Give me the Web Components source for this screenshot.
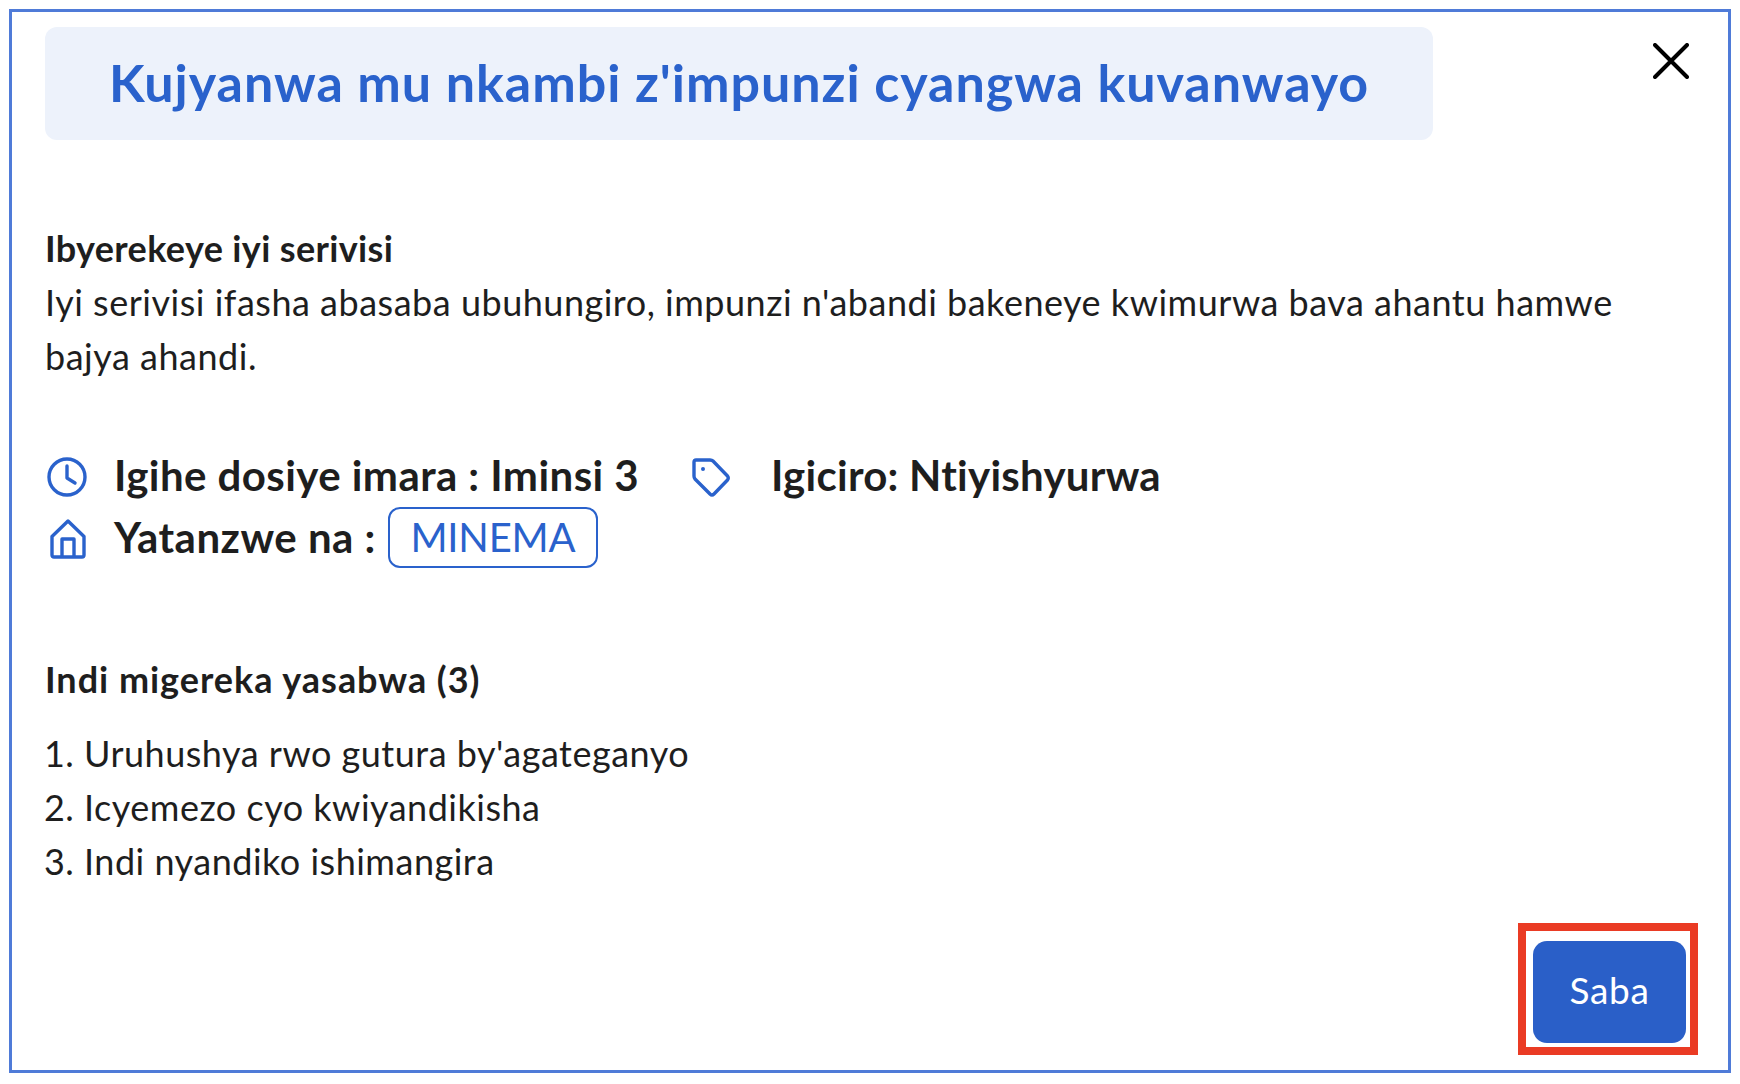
<!DOCTYPE html>
<html lang="rw">
<head>
<meta charset="utf-8">
<title>Kujyanwa mu nkambi</title>
<style>
  html, body { margin: 0; background: #fff; }
  body { font-family: Lato, "Noto Sans", sans-serif; color: #1e1e1e; }
</style>
</head>
<body>
<service-modal>
  <span slot="title">Kujyanwa mu nkambi z'impunzi cyangwa kuvanwayo</span>
  <info-section heading="Ibyerekeye iyi serivisi">
    Iyi serivisi ifasha abasaba ubuhungiro, impunzi n'abandi bakeneye kwimurwa bava ahantu hamwe bajya ahandi.
  </info-section>
  <meta-rows></meta-rows>
  <doc-list heading="Indi migereka yasabwa (3)">
    <li>Uruhushya rwo gutura by'agateganyo</li>
    <li>Icyemezo cyo kwiyandikisha</li>
    <li>Indi nyandiko ishimangira</li>
  </doc-list>
  <next-button slot="footer">Saba</next-button>
</service-modal>

<script>
class ServiceModal extends HTMLElement {
  connectedCallback() {
    if (this.shadowRoot) return;
    this.attachShadow({ mode: "open" }).innerHTML = `
      <style>
        :host { display: flex; flex-direction: column; box-sizing: border-box; width: 1722px; height: 1064px; margin: 9px 0 0 9px; border: 3px solid #4f7bd8; padding: 15px 39px 15px 33px; background: #fff; }
        .top { display: flex; justify-content: space-between; align-items: flex-start; }
        .title { box-sizing: border-box; width: 1388px; height: 113px; padding: 0 0 4px 64px; display: flex; align-items: center; background: #edf2fb; border-radius: 12px; color: #2a62cc; font-size: 52px; font-weight: 700; letter-spacing: 0.97px; white-space: nowrap; }
        .close { width: 36px; height: 36px; margin-top: 16px; display: block; }
        .body { flex: 1; }
        .footer { display: flex; justify-content: flex-end; margin-right: -9px; }
      </style>
      <div class="top">
        <div class="title"><slot name="title"></slot></div>
        <svg class="close" viewBox="0 0 36 36" fill="none" stroke="#000" stroke-width="4" stroke-linecap="round"><path d="M2 2 34 34M34 2 2 34"/></svg>
      </div>
      <div class="body"><slot></slot></div>
      <div class="footer"><slot name="footer"></slot></div>`;
  }
}

class InfoSection extends HTMLElement {
  connectedCallback() {
    if (this.shadowRoot) return;
    this.attachShadow({ mode: "open" }).innerHTML = `
      <style>
        :host { display: block; margin-top: 81px; font-size: 36px; line-height: 54px; letter-spacing: 0.51px; }
        h2 { margin: 0; font-size: 36px; font-weight: 700; line-height: 54px; letter-spacing: 0.35px; }
      </style>
      <h2>${this.getAttribute("heading")}</h2>
      <slot></slot>`;
  }
}

class MetaRows extends HTMLElement {
  connectedCallback() {
    if (this.shadowRoot) return;
    this.attachShadow({ mode: "open" }).innerHTML = `
      <style>
        :host { display: block; margin-top: 61px; font-size: 42px; font-weight: 700; line-height: 48px; letter-spacing: 0.43px; }
        .row { display: flex; align-items: center; height: 62px; }
        svg { display: block; flex: none; margin-top: 4px; fill: none; stroke: #2a62cc; stroke-width: 3.4; stroke-linecap: round; stroke-linejoin: round; }
        .clock { width: 40px; height: 40px; margin-left: 2px; margin-right: 27px; }
        .tag { width: 38px; height: 39px; margin-left: 53px; margin-right: 41px; }
        .home { width: 36px; height: 40px; margin-left: 5px; margin-right: 28px; }
        .price { letter-spacing: 0.26px; }
        .owner { letter-spacing: 0.5px; }
        .chip { box-sizing: border-box; height: 61px; margin-left: 12px; padding: 0 20.5px; display: flex; align-items: center; border: 2px solid #2a62cc; border-radius: 12px; color: #2a62cc; font-size: 40px; font-weight: 400; letter-spacing: -0.2px; }
      </style>
      <div class="row">
        <svg class="clock" viewBox="0 0 40 40"><circle cx="20" cy="20" r="18"/><path d="M20 9V21L28 26"/></svg>
        <span>Igihe dosiye imara : Iminsi 3</span>
        <svg class="tag" viewBox="0 0 38 39"><path d="M4 2H18Q20 2 21 3L35.5 18Q37 20 35.5 22L22 36Q20 38 18 36L3 21Q2 20 2 18V4Q2 2 4 2Z"/><circle cx="11" cy="11" r="1" stroke-width="2"/></svg>
        <span class="price">Igiciro: Ntiyishyurwa</span>
      </div>
      <div class="row">
        <svg class="home" viewBox="0 0 36 40"><path d="M2 17.5 18 2 34 17.5V36Q34 38 32 38H4Q2 38 2 36ZM12 38V20H24V38"/></svg>
        <span class="owner">Yatanzwe na :</span>
        <span class="chip">MINEMA</span>
      </div>`;
  }
}

class DocList extends HTMLElement {
  connectedCallback() {
    if (this.shadowRoot) return;
    this.attachShadow({ mode: "open" }).innerHTML = `
      <style>
        :host { display: block; margin-top: 84px; font-size: 36px; }
        h2 { margin: 0 0 20px; font-size: 36px; font-weight: 700; line-height: 54px; letter-spacing: 0.97px; }
        ol { margin: 0; padding: 0 0 0 39px; line-height: 54px; letter-spacing: 0.5px; }
      </style>
      <h2>${this.getAttribute("heading")}</h2>
      <ol><slot></slot></ol>`;
  }
}

class NextButton extends HTMLElement {
  connectedCallback() {
    if (this.shadowRoot) return;
    this.attachShadow({ mode: "open" }).innerHTML = `
      <style>
        :host { display: block; box-sizing: border-box; width: 180px; height: 132px; border: 8px solid #ea3b24; padding: 10px 4px 4px 7px; }
        button { display: block; width: 153px; height: 102px; padding: 0 0 5px; border: 0; border-radius: 14px; background: #2a5fc8; color: #fff; font: 400 37px Lato, "Noto Sans", sans-serif; letter-spacing: 0.7px; }
      </style>
      <button><slot></slot></button>`;
  }
}

customElements.define("service-modal", ServiceModal);
customElements.define("info-section", InfoSection);
customElements.define("meta-rows", MetaRows);
customElements.define("doc-list", DocList);
customElements.define("next-button", NextButton);
</script>
</body>
</html>
